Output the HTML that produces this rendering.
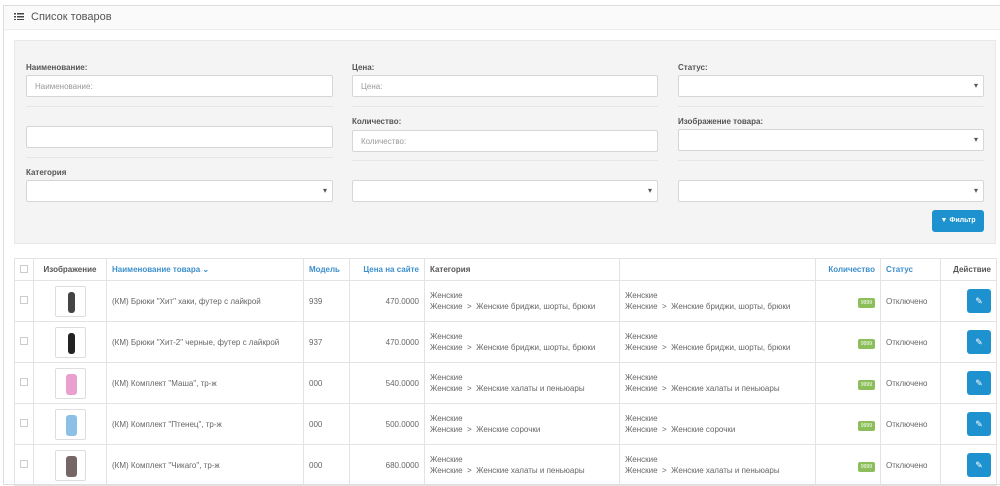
<!DOCTYPE html><html><head><meta charset="utf-8"><style>
*{box-sizing:border-box;margin:0;padding:0}
body{width:1000px;height:473px;overflow:hidden;background:#fff;font-family:"Liberation Sans",sans-serif;color:#666;position:relative}
.a{position:absolute}
.outer{left:3px;top:5px;width:1000px;height:480px;border:1px solid #ddd;border-right:none}
.hdr{left:4px;top:6px;width:996px;height:24px;background:#fafafa;border-bottom:1px solid #eee}
.panel{left:14px;top:40px;width:982px;height:204px;background:#f4f4f4;border:1px solid #e8e8e8}
.lbl{font-size:8px;font-weight:bold;color:#555}
.in{background:#fff;border:1px solid #d6d6d6;border-radius:2px;height:22px;font-size:8px;color:#999;padding:6px 8px}
.sel:after{content:"▾";position:absolute;right:5px;top:5px;font-size:8px;color:#555}
.hr{height:1px;background:#e6e6e6}
table{position:absolute;left:14px;top:258px;width:982px;border-collapse:collapse;table-layout:fixed;font-size:8px;color:#666}
td,th{border:1px solid #e3e3e3;padding:0 5px;height:41px;white-space:nowrap;overflow:hidden}
th{height:22px;text-align:left;font-weight:bold;color:#555}
th.b{color:#3d8fcc}
.r{text-align:right}.c{text-align:center}
.cb{width:8px;height:8px;border:1px solid #ccc;display:inline-block;background:#fff}
.img{width:31px;height:31px;border:1px solid #ddd;border-radius:2px;margin:auto;position:relative;background:#fff}
.img i{position:absolute;left:12px;top:5px;width:7px;height:21px;border-radius:3px}
.bd{background:#8cbf5b;color:#fff;font-size:5px;padding:2px 3px;border-radius:2px}
.btn{width:24px;height:24px;background:#1e91cf;border-radius:3px;display:inline-block;color:#fff;text-align:center;line-height:24px;font-size:9px}
.cat{line-height:11px;font-size:8px}
</style></head><body>
<div class="a outer"></div>
<div class="a hdr"></div>
<div class="a" style="left:14px;top:13px;width:2px;height:7px;background:repeating-linear-gradient(#444 0 1.5px,transparent 1.5px 3px)"></div>
<div class="a" style="left:17px;top:13px;width:7px;height:7px;background:repeating-linear-gradient(#444 0 1.5px,transparent 1.5px 3px)"></div>
<div class="a" style="left:31px;top:11px;font-size:11px;color:#555">Список товаров</div>
<div class="a panel"></div>
<div class="a lbl" style="left:26px;top:63px">Наименование:</div>
<div class="a in" style="left:26px;top:75px;width:307px">Наименование:</div>
<div class="a lbl" style="left:352px;top:63px">Цена:</div>
<div class="a in" style="left:352px;top:75px;width:306px">Цена:</div>
<div class="a lbl" style="left:678px;top:63px">Статус:</div>
<div class="a in sel" style="left:678px;top:75px;width:306px"></div>
<div class="a hr" style="left:26px;top:106px;width:307px"></div>
<div class="a hr" style="left:352px;top:106px;width:306px"></div>
<div class="a hr" style="left:678px;top:106px;width:306px"></div>
<div class="a in" style="left:26px;top:126px;width:307px"></div>
<div class="a lbl" style="left:352px;top:117px">Количество:</div>
<div class="a in" style="left:352px;top:130px;width:306px">Количество:</div>
<div class="a lbl" style="left:678px;top:117px">Изображение товара:</div>
<div class="a in sel" style="left:678px;top:129px;width:306px"></div>
<div class="a hr" style="left:26px;top:157px;width:307px"></div>
<div class="a hr" style="left:352px;top:160px;width:306px"></div>
<div class="a hr" style="left:678px;top:160px;width:306px"></div>
<div class="a lbl" style="left:26px;top:168px">Категория</div>
<div class="a in sel" style="left:26px;top:180px;width:307px"></div>
<div class="a in sel" style="left:352px;top:180px;width:306px"></div>
<div class="a in sel" style="left:678px;top:180px;width:306px"></div>
<div class="a" style="left:932px;top:210px;width:52px;height:22px;background:#1e91cf;border-radius:3px;color:#fff;font-size:7px;font-weight:bold;text-align:center;line-height:22px">▼ Фильтр</div>
<table>
<colgroup><col style="width:19px"><col style="width:73px"><col style="width:197px"><col style="width:46px"><col style="width:75px"><col style="width:195px"><col style="width:196px"><col style="width:65px"><col style="width:60px"><col style="width:56px"></colgroup>
<tr><th class="c"><span class="cb"></span></th><th class="c">Изображение</th><th class="b">Наименование товара ⌄</th><th class="b">Модель</th><th class="b r">Цена на сайте</th><th>Категория</th><th></th><th class="b r">Количество</th><th class="b">Статус</th><th class="r">Действие</th></tr>
<tr><td class="c"><span class="cb"></span></td><td><div class="img"><i style="background:#444"></i></div></td><td>(КМ) Брюки "Хит" хаки, футер с лайкрой</td><td>939</td><td class="r">470.0000</td><td class="cat">Женские<br>Женские &nbsp;&gt;&nbsp; Женские бриджи, шорты, брюки</td><td class="cat">Женские<br>Женские &nbsp;&gt;&nbsp; Женские бриджи, шорты, брюки</td><td class="r"><span class="bd">9999</span></td><td>Отключено</td><td class="r"><span class="btn">✎</span></td></tr>
<tr><td class="c"><span class="cb"></span></td><td><div class="img"><i style="background:#222"></i></div></td><td>(КМ) Брюки "Хит-2" черные, футер с лайкрой</td><td>937</td><td class="r">470.0000</td><td class="cat">Женские<br>Женские &nbsp;&gt;&nbsp; Женские бриджи, шорты, брюки</td><td class="cat">Женские<br>Женские &nbsp;&gt;&nbsp; Женские бриджи, шорты, брюки</td><td class="r"><span class="bd">9999</span></td><td>Отключено</td><td class="r"><span class="btn">✎</span></td></tr>
<tr><td class="c"><span class="cb"></span></td><td><div class="img"><i style="background:#e9a0d0;width:11px;left:10px"></i></div></td><td>(КМ) Комплект "Маша", тр-ж</td><td>000</td><td class="r">540.0000</td><td class="cat">Женские<br>Женские &nbsp;&gt;&nbsp; Женские халаты и пеньюары</td><td class="cat">Женские<br>Женские &nbsp;&gt;&nbsp; Женские халаты и пеньюары</td><td class="r"><span class="bd">9999</span></td><td>Отключено</td><td class="r"><span class="btn">✎</span></td></tr>
<tr><td class="c"><span class="cb"></span></td><td><div class="img"><i style="background:#8cc0e6;width:11px;left:10px"></i></div></td><td>(КМ) Комплект "Птенец", тр-ж</td><td>000</td><td class="r">500.0000</td><td class="cat">Женские<br>Женские &nbsp;&gt;&nbsp; Женские сорочки</td><td class="cat">Женские<br>Женские &nbsp;&gt;&nbsp; Женские сорочки</td><td class="r"><span class="bd">9999</span></td><td>Отключено</td><td class="r"><span class="btn">✎</span></td></tr>
<tr><td class="c"><span class="cb"></span></td><td><div class="img"><i style="background:#776666;width:11px;left:10px"></i></div></td><td>(КМ) Комплект "Чикаго", тр-ж</td><td>000</td><td class="r">680.0000</td><td class="cat">Женские<br>Женские &nbsp;&gt;&nbsp; Женские халаты и пеньюары</td><td class="cat">Женские<br>Женские &nbsp;&gt;&nbsp; Женские халаты и пеньюары</td><td class="r"><span class="bd">9999</span></td><td>Отключено</td><td class="r"><span class="btn">✎</span></td></tr>
</table>
</body></html>
